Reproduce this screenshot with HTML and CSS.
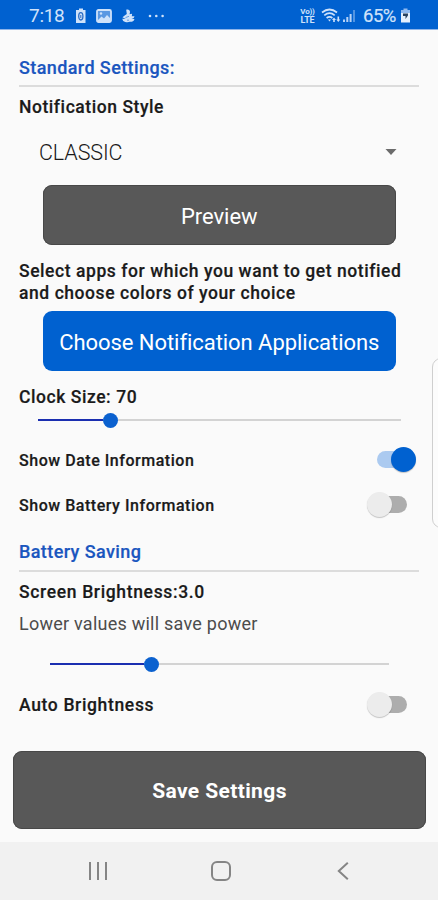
FILE: index.html
```html
<!DOCTYPE html>
<html lang="en">
<head>
<meta charset="utf-8">
<title>Settings</title>
<link rel="stylesheet" href="styles.css">
</head>
<body>
<div class="screen">
  <header class="status">
    <div class="status-left">
      <span class="time">7:18</span>
      <svg class="i-batt" width="12" height="16" viewBox="0 0 12 16"><path d="M4 .5h4V2h2.500v13H1V2h3z" fill="#cfe2fa"/><ellipse cx="5.800" cy="8.300" rx="2.100" ry="3.700" fill="none" stroke="#2a6cc4" stroke-width="1.300"/><path d="M5.800 7v3" stroke="#2a6cc4"/></svg>
      <svg class="i-pic" width="16" height="14" viewBox="0 0 16 14"><rect x="1" y="1" width="14" height="12" rx="1.500" fill="#5b98e2" stroke="#cfe2fa" stroke-width="1.800"/><path d="M2 11l3.500-3.500L8 9.500 11 6l3 3v3H2z" fill="#cfe2fa"/><circle cx="5" cy="4.500" r="1.200" fill="#cfe2fa"/></svg>
      <svg class="i-app" width="14" height="14" viewBox="0 0 14 14"><path d="M5.200.8c2-.9 4 .2 3.800 2.400L8.500 5.200l2.600-.4-.3 2.500h2.700l-.8 1.700h-2.200l3 1.200c-.8 2-2.800 2.800-4.700 2.500-1.500.8-4.700.6-6.600-.8l-1-2.200 3.300.3L1.500 8.200 4 6.300 5.800 5z" fill="#cfe2fa"/><path d="M4.500 8.600l3.500-1.300M6 11.200h2" stroke="#3b7fd2" stroke-width=".7"/></svg>
      <svg class="i-dots" width="17" height="4" viewBox="0 0 17 4" fill="#cfe2fa"><circle cx="2" cy="2" r="1.300"/><circle cx="8.300" cy="2" r="1.300"/><circle cx="14.600" cy="2" r="1.300"/></svg>
    </div>
    <div class="status-right">
      <div class="volte"><span class="vo">Vo))</span><span>LTE</span></div>
      <svg class="i-wifi" width="20" height="16" viewBox="0 0 20 16" fill="none" stroke="#cfe2fa" stroke-width="1.700"><path d="M1 4.500Q8.500-1.500 16 4.500M3.300 7.300Q8.500 3 13.700 7.300M5.600 10Q8.500 7.700 11.400 10"/><path d="M7 11.500h3l-1.500 2z" fill="#cfe2fa" stroke="none"/><path d="M13 9.500l2 2.500h-1.200v2h-1.600v-2H11zM17.300 14l-2-2.500h1.200v-3h1.600v3h1.200z" fill="#cfe2fa" stroke="none"/></svg>
      <svg class="i-sig" width="13" height="14" viewBox="0 0 13 14" fill="#b5d2f7"><path d="M0 10.500h2V13H0zM3.300 8h2v5h-2zM6.600 5h2v8h-2z"/><path d="M10 1h2v12h-2z" opacity=".45"/></svg>
      <span class="pct">65%</span>
      <svg class="i-chg" width="11" height="15" viewBox="0 0 11 15"><path d="M3.500.5h4V2H10v4H1V2h2.500z" fill="#8fbaf0"/><path d="M1 5h9v9.500H1z" fill="#e4f0fd"/><path d="M3 5.500h5v2L5.500 11V8H3z" fill="#27415f"/></svg>
    </div>
  </header>

  <main class="content">
    <h2 class="section first"><span>Standard Settings:</span></h2>
    <div class="label l-style">Notification Style</div>
    <div class="select"><span>CLASSIC</span><svg width="12" height="6" viewBox="0 0 12 6"><path d="M.5 0h11L6 6z" fill="#6b6b6b"/></svg></div>
    <button class="btn grey">Preview</button>
    <p class="label para">Select apps for which you want to get notified<br>and choose colors of your choice</p>
    <button class="btn blue">Choose Notification Applications</button>
    <div class="label l-clock">Clock Size: 70</div>
    <div class="slider s-clock"><i class="fill"></i><i class="thumb"></i><i class="rest"></i></div>
    <div class="row r-date"><span>Show Date Information</span><span class="toggle on"></span></div>
    <div class="row r-batt"><span>Show Battery Information</span><span class="toggle"></span></div>
    <h2 class="section second"><span>Battery Saving</span></h2>
    <div class="label l-screen">Screen Brightness:3.0</div>
    <div class="hint">Lower values will save power</div>
    <div class="slider s-bright"><i class="fill"></i><i class="thumb"></i><i class="rest"></i></div>
    <div class="row auto"><span>Auto Brightness</span><span class="toggle"></span></div>
    <button class="save">Save Settings</button>
  </main>

  <nav class="nav">
    <svg width="18" height="18" viewBox="0 0 18 18" stroke="#858585" stroke-width="2"><path d="M1 0v18M9 0v18M17 0v18"/></svg>
    <svg class="home" width="20" height="20" viewBox="0 0 20 20" fill="none" stroke="#858585" stroke-width="2"><rect x="1" y="1" width="18" height="18" rx="5"/></svg>
    <svg width="12" height="18" viewBox="0 0 12 18" fill="none" stroke="#858585" stroke-width="2"><path d="M10.800.8L1.800 9l9 8.200"/></svg>
  </nav>
  <div class="edge"></div>
</div>
</body>
</html>
```
FILE: styles.css
```css
* { box-sizing: border-box; }
body { margin: 0; font-family: Roboto, "Liberation Sans", sans-serif; background: #fafafa; }
.screen { position: relative; width: 438px; height: 900px; overflow: hidden; display: flex; flex-direction: column; background: #fafafa; color: #1a1a1a; }
svg { display: block; flex: none; }
span { white-space: nowrap; }

.status { flex: none; height: 30px; background: #0061d0; border-bottom: 1px solid #8db4ea; display: flex; justify-content: space-between; padding: 2px 27px 0 29px; color: #cfe2fa; font-size: 19px; }
.status-left, .status-right { display: flex; align-items: center; }
.time { width: 35px; letter-spacing: -.3px; }
.i-batt { margin-left: 11px; }
.i-pic { margin-left: 9px; }
.i-app { margin-left: 9px; }
.i-dots { margin-left: 13px; }
.volte { display: flex; flex-direction: column; width: 15px; font-size: 9px; gap: 0; font-weight: 700; align-items: center; letter-spacing: -.2px; }
.volte span { line-height: 8px; }
.volte .vo { font-size: 8px; }
.i-wifi { margin-left: 6px; }
.i-sig { margin-left: 2px; }
.pct { margin-left: 7px; width: 34px; font-size: 18.500px; letter-spacing: -.5px; -webkit-text-stroke: .2px; }
.i-chg { margin-left: 3px; }

.content { flex: none; height: 812px; padding: 27px 19px 0; display: flex; flex-direction: column; }
.content > * { flex: none; }
.section { margin: 0; height: 30px; border-bottom: 2px solid #dcdcdc; font-size: 18px; line-height: 22px; font-weight: 500; color: #1a56bf; letter-spacing: .4px; -webkit-text-stroke: .2px; }
.label { margin: 0; font-size: 17.500px; line-height: 22px; font-weight: 500; letter-spacing: .56px; -webkit-text-stroke: .2px; white-space: nowrap; }
.l-style { margin-top: 9px; }
.select { height: 67px; padding: 1px 22px 0 20px; display: flex; align-items: center; justify-content: space-between; font-size: 21.500px; font-weight: 300; letter-spacing: -.1px; }
.btn { height: 60px; margin: 0 23.500px 0 24px; padding: 2px 0 0; border: 0; border-radius: 9px; color: #fff; font: 400 22px Roboto, sans-serif; letter-spacing: -.05px; display: flex; align-items: center; justify-content: center; white-space: nowrap; }
.grey { background: #585858; box-shadow: inset 0 0 0 1px #484848; }
.blue { background: #0061d0; height: 60px; margin-top: 7px; }
.para { margin-top: 15px; }
.l-clock { margin-top: 15px; }
.slider { display: flex; align-items: center; height: 16px; }
.fill { height: 2px; background: #1a2eb0; }
.rest { height: 2px; background: #d3d3d3; flex: 1; }
.thumb { width: 15px; height: 15px; border-radius: 50%; background: #0b61cf; flex: none; }
.s-clock { margin: 4px 18px 0 19px; }
.s-clock .fill { width: 65px; }
.s-bright { margin: 21px 30px 0 31px; }
.s-bright .fill { width: 94px; }
.row { display: flex; align-items: center; justify-content: space-between; height: 45px; padding-right: 3px; font-size: 16px; font-weight: 500; letter-spacing: .53px; -webkit-text-stroke: .2px; }
.r-date { margin-top: 9px; }
.r-date span:first-child, .r-batt span:first-child { padding-top: 1px; }
.toggle { width: 49px; height: 25px; padding: 0 9px 0 10px; display: flex; align-items: center; position: relative; }
.toggle::before { content: ""; width: 30px; height: 17px; border-radius: 9px; background: #adadad; }
.toggle::after { content: ""; position: absolute; left: 0; top: 0; width: 25px; height: 25px; border-radius: 50%; background: #ececec; box-shadow: 0 1px 1px rgba(0,0,0,.22); }
.toggle.on::before { background: #abcaf0; }
.toggle.on::after { left: 24px; background: #0061d0; }
.second { margin-top: 14px; height: 31px; }
.l-screen { margin-top: 9px; letter-spacing: .65px; }
.hint { margin-top: 10px; font-size: 18px; line-height: 22px; color: #4c4c4c; letter-spacing: .24px; }
.auto { margin-top: 10px; font-size: 17.500px; letter-spacing: .65px; }
.save { height: 78px; margin: 24px -7px 0 -6px; padding: 2px 0 0; border: 0; border-radius: 9px; background: #585858; box-shadow: inset 0 0 0 1px #484848; color: #fff; font: 700 21px Roboto, sans-serif; letter-spacing: .38px; }

.nav { flex: 1; background: #f1f1f1; display: flex; align-items: center; justify-content: space-between; padding: 0 89px; }
.home { margin-right: 2px; }
.edge { position: absolute; left: 432px; top: 358px; width: 20px; height: 170px; border: 1px solid #cfcfcf; border-radius: 9px; background: #fcfcfc; }
```
